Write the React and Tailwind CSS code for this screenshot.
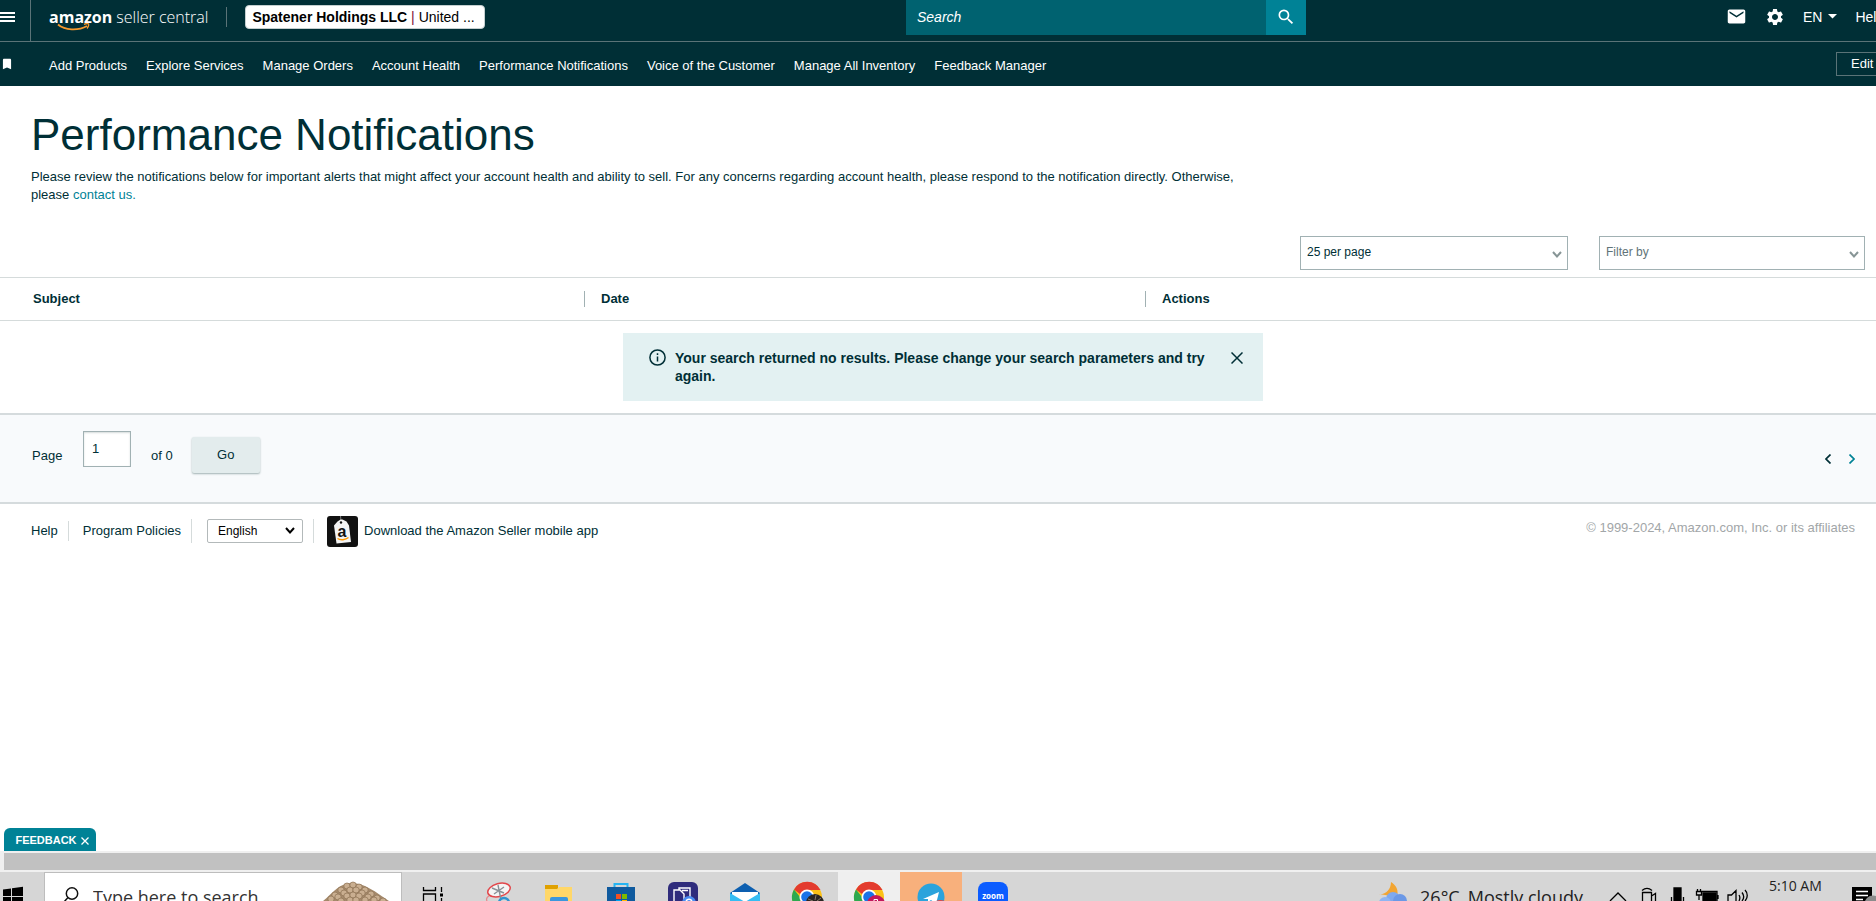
import React from "react";
import { MdMail, MdSettings, MdSearch, MdBookmark } from "react-icons/md";

const navLinks = [
  "Add Products",
  "Explore Services",
  "Manage Orders",
  "Account Health",
  "Performance Notifications",
  "Voice of the Customer",
  "Manage All Inventory",
  "Feedback Manager",
];

const Logo = () => (
  <a href="#" className="relative flex text-white leading-5 whitespace-nowrap">
    <span className="font-['Open_Sans','Noto_Sans',sans-serif] text-base leading-5 font-bold">
      amazon
    </span>
    <span className="ml-1 font-['Open_Sans','Noto_Sans',sans-serif] text-base leading-5 font-light">
      seller central
    </span>
    <svg
      className="absolute left-2 top-4"
      width="36"
      height="9"
      viewBox="0 0 36 9"
      fill="none"
      stroke="#f79a2d"
    >
      <path d="M1 1.500C8 7.500 21 8 30 3" strokeWidth="1.800" />
      <path d="M27 1.300c2-.8 4-.8 4.500-.3s0 2.800-1.500 4.500" strokeWidth="1.300" />
    </svg>
  </a>
);

const Header = () => (
  <header className="bg-[#002f36] text-white">
    <div className="flex h-[42px] border-b border-[#5a7377]">
      <button aria-label="Menu" className="w-[31px] shrink-0 border-r border-[#5a7377]">
        <svg width="15" height="10" viewBox="0 0 15 10" fill="#fff" className="-mt-2">
          <path d="M0 0h15v2H0zM0 4h15v2H0zM0 8h15v2H0z" />
        </svg>
      </button>
      <div className="flex h-[35px] flex-1 items-center">
        <div className="flex w-[875px] shrink-0 items-center pb-0.5 pl-[18px]">
          <Logo />
          <div className="ml-[18px] h-5 w-px bg-[#5a7377]" />
          <button className="ml-[18px] h-6 w-60 rounded-sm border border-[#c5cfd0] bg-white pl-1.5 text-left text-sm leading-5 text-black">
            <b>Spatener Holdings LLC</b> <span className="text-[#7a1238]">|</span> United ...
          </button>
        </div>
        <form className="flex h-full w-[400px] shrink-0">
          <input
            aria-label="Search"
            placeholder="Search"
            className="h-full min-w-0 flex-1 bg-[#006270] pb-0.5 pl-[11px] text-sm italic outline-none placeholder:text-white"
          />
          <button
            type="button"
            aria-label="Submit search"
            className="flex w-10 items-center justify-center bg-[#008296] pb-0.5"
          >
            <MdSearch size={20} />
          </button>
        </form>
        <div className="ml-auto flex w-[150px] shrink-0 items-center overflow-hidden pb-0.5 text-sm">
          <button aria-label="Messages">
            <MdMail size={21} />
          </button>
          <button aria-label="Settings" className="ml-[18px]">
            <MdSettings size={20} />
          </button>
          <button className="ml-[18px] flex items-center gap-1.5">
            EN
            <svg width="9" height="5" viewBox="0 0 9 5" fill="#fff">
              <path d="M0 0h9L4.500 4.500z" />
            </svg>
          </button>
          <a href="#" className="ml-[18px]">
            Help
          </a>
        </div>
      </div>
    </div>
    <div className="flex h-11 items-center overflow-hidden text-[13px]">
      <MdBookmark size={14} className="w-[14px] shrink-0" />
      <nav className="ml-[35px] flex gap-[19px] pt-1">
        {navLinks.map((link) => (
          <a key={link} href="#" className="whitespace-nowrap">
            {link}
          </a>
        ))}
      </nav>
      <div className="ml-auto w-10 shrink-0 overflow-hidden">
        <button className="h-6 w-14 border border-[#5a7377] pl-3.5 text-left">Edit</button>
      </div>
    </div>
  </header>
);

const FilterSelect = ({ label, width, color }) => (
  <div className={`relative ${width}`}>
    <select
      aria-label={label}
      className={`h-[34px] w-full appearance-none border border-[#a1b1b3] bg-white px-1.5 pb-0.5 text-xs ${color}`}
    >
      <option>{label}</option>
    </select>
    <svg
      className="pointer-events-none absolute right-1.5 top-[15px]"
      width="10"
      height="7"
      viewBox="0 0 10 7"
      fill="none"
      stroke="#879596"
      strokeWidth="2"
    >
      <path d="M1 1l4 4.500L9 1" />
    </svg>
  </div>
);

const Notifications = () => (
  <main>
    <section className="px-[31px] pt-6">
      <h1 className="text-[44px] leading-[50px]">Performance Notifications</h1>
      <p className="mt-2 max-w-[1240px] text-[13px] leading-[18px]">
        Please review the notifications below for important alerts that might affect your account
        health and ability to sell. For any concerns regarding account health, please respond to the
        notification directly. Otherwise, please{" "}
        <a href="#" className="text-[#008296]">
          contact us.
        </a>
      </p>
    </section>
    <div className="mt-8 flex justify-end gap-[31px] pr-[11px]">
      <FilterSelect label="25 per page" width="w-[268px]" color="text-[#002f36]" />
      <FilterSelect label="Filter by" width="w-[266px]" color="text-[#5f7478]" />
    </div>
    <table className="mt-[7px] w-full table-fixed border-y border-[#d5dbdb] text-left text-[13px]">
      <thead>
        <tr className="h-[43px]">
          <th className="w-[584px] pl-[33px]">Subject</th>
          <th className="w-[561px]">
            <div className="border-l border-[#a1b1b3] pl-4 leading-4">Date</div>
          </th>
          <th>
            <div className="border-l border-[#a1b1b3] pl-4 leading-4">Actions</div>
          </th>
        </tr>
      </thead>
    </table>
    <div className="mt-3 flex px-[623px]">
      <div role="alert" className="flex h-[68px] w-[640px] shrink-0 bg-[#e3f1f2] pl-[26px] pt-4">
        <svg
          className="shrink-0"
          width="17"
          height="17"
          viewBox="0 0 17 17"
          fill="none"
          stroke="#002f36"
          strokeWidth="1.500"
        >
          <circle cx="8.500" cy="8.500" r="7.600" />
          <path d="M8.500 7.500v5M8.500 4.300v1.700" />
        </svg>
        <p className="ml-[9px] w-[545px] text-sm font-bold leading-[18px]">
          Your search returned no results. Please change your search parameters and try again.
        </p>
        <button aria-label="Close" className="ml-[11px] h-[17px]">
          <svg
            width="12"
            height="12"
            viewBox="0 0 12 12"
            stroke="#002f36"
            strokeWidth="1.500"
          >
            <path d="M.5.5l11 11M11.500.5l-11 11" />
          </svg>
        </button>
      </div>
    </div>
    <div className="mt-3 flex h-[91px] border-y-2 border-[#d5dbdd] bg-[#f8fafc] pl-8 pr-[21px] text-[13px]">
      <label htmlFor="page" className="mt-[31px] w-[51px]">
        Page
      </label>
      <input
        id="page"
        defaultValue="1"
        className="mt-4 h-9 w-12 border border-[#a1b1b3] bg-white pb-0.5 pl-2 text-[13px] shadow-[inset_0_1px_2px_#d5dbdb]"
      />
      <span className="ml-5 mt-[31px]">of 0</span>
      <button className="ml-[19px] mt-[22px] h-9 w-[68px] rounded-xs bg-[#e3eced] shadow-[0_1px_2px_#a1b1b3]">
        Go
      </button>
      <div className="ml-auto flex h-[88px] items-center gap-[18px]">
        <button aria-label="Previous page">
          <svg width="6" height="10" viewBox="0 0 6 10" fill="none" stroke="#002f36" strokeWidth="1.700">
            <path d="M5.500.500L1 5l4.500 4.500" />
          </svg>
        </button>
        <button aria-label="Next page">
          <svg width="6" height="10" viewBox="0 0 6 10" fill="none" stroke="#008296" strokeWidth="1.700">
            <path d="M.5.5L5 5 .5 9.500" />
          </svg>
        </button>
      </div>
    </div>
  </main>
);

const AppBadge = () => (
  <svg width="31" height="31" viewBox="0 0 31 31" className="mr-1.5">
    <rect width="31" height="31" rx="3" fill="#111" />
    <path d="M13.500 0l.5 5" stroke="#777" />
    <path d="M10.500 5.500l3-2h2l4 2 2.500 4 2 16.500-14.500 1.500L7 9.500z" fill="#f4f4f4" />
    <circle cx="14" cy="6.500" r="1.200" fill="#111" />
    <text x="10.500" y="20.500" fontSize="16" fontWeight="bold" fill="#111">
      a
    </text>
    <path d="M10.500 22.500c3 2 8 1.500 11-1" stroke="#f90" strokeWidth="1.500" fill="none" />
  </svg>
);

const Footer = () => (
  <footer className="flex items-start pl-[31px] pr-[21px] pt-3 text-[13px]">
    <div className="flex h-[31px] items-center pb-px">
      <a href="#" className="pr-2.5">
        Help
      </a>
      <a href="#" className="border-l border-[#d5dbdb] pl-3.5 pr-2.5">
        Program Policies
      </a>
      <div className="relative border-l border-[#d5dbdb] pl-[15px] pr-2.5">
        <select
          aria-label="Language"
          className="block h-6 w-24 appearance-none rounded-xs border border-[#b3b9ba] bg-white pl-2.5 text-xs text-black"
        >
          <option>English</option>
        </select>
        <svg
          className="pointer-events-none absolute right-[18px] top-2"
          width="10"
          height="8"
          viewBox="0 0 10 8"
          fill="none"
          stroke="#000"
          strokeWidth="2"
        >
          <path d="M1 1l4 4.500L9 1" />
        </svg>
      </div>
      <div className="h-6 w-px bg-[#d5dbdb]" />
      <a href="#" className="flex items-center pl-[13px]">
        <AppBadge />
        Download the Amazon Seller mobile app
      </a>
    </div>
    <span className="ml-auto mt-0.5 text-[#a2a6a8]">
      © 1999-2024, Amazon.com, Inc. or its affiliates
    </span>
  </footer>
);

const TaskButton = ({ label, tile, children }) => (
  <button aria-label={label} className={`h-[29px] w-[62px] shrink-0 ${tile || ""}`}>
    <svg width="62" height="29" viewBox="0 0 62 29" className="block">
      {children}
    </svg>
  </button>
);

const Chrome = () => (
  <>
    <circle cx="31" cy="25" r="15" fill="#fbc116" />
    <path d="M18 17.500A15 15 0 0 1 44.500 18H31l-7 4z" fill="#e33b2e" />
    <path d="M18 17.500A15 15 0 0 0 25 39l6-8-7-6z" fill="#2da94f" />
    <circle cx="31" cy="25" r="7.500" fill="#fff" />
    <circle cx="31" cy="25" r="5.800" fill="#1a73e8" />
  </>
);

const seeds = [
  [16, 22], [22, 17], [28, 13], [34, 12], [40, 14], [46, 17], [52, 21], [58, 25],
  [12, 26], [19, 24], [25, 20], [31, 17], [37, 17], [43, 20], [49, 24], [55, 27],
  [22, 28], [28, 23], [34, 22], [40, 23], [46, 27], [31, 27], [37, 27], [64, 28],
];

const TaskSearch = () => (
  <div className="flex w-[358px] shrink-0 items-start overflow-hidden border border-b-0 border-[#bdbdbd] bg-white">
    <svg
      width="16"
      height="16"
      viewBox="0 0 16 16"
      fill="none"
      stroke="#111"
      strokeWidth="1.500"
      className="ml-[18px] mt-3.5 shrink-0"
    >
      <circle cx="9" cy="6.500" r="5.700" />
      <path d="M5 10.500L.5 15.500" />
    </svg>
    <input
      aria-label="Type here to search"
      placeholder="Type here to search"
      className="ml-3.5 mt-3 h-6 w-[220px] bg-transparent text-lg leading-6 placeholder:text-[#333]"
    />
    <svg width="72" height="28" viewBox="0 0 72 28" className="ml-1.5 shrink-0">
      <path d="M4 28C14 20 20 10 33 10c12 0 24 9 37 18z" fill="#a58a6c" />
      {seeds.map(([x, y]) => (
        <ellipse
          key={`${x}-${y}`}
          cx={x}
          cy={y}
          rx="3.200"
          ry="3"
          fill="#c9ae90"
          stroke="#8d7153"
          strokeWidth=".7"
        />
      ))}
    </svg>
  </div>
);

const Tray = () => (
  <div className="ml-auto flex items-start">
    <svg width="30" height="29" viewBox="0 0 30 29">
      <path d="M13 10c5 3 8 8 6 15L1 22c6 1 12-4 12-12z" fill="#f2a532" />
      <circle cx="15" cy="27" r="7" fill="#7fa9ee" />
      <circle cx="22" cy="29" r="7" fill="#6b98e6" />
      <circle cx="7" cy="31" r="6" fill="#8fb5f2" />
    </svg>
    <span className="ml-3 mt-[13px] flex gap-2 whitespace-nowrap text-lg leading-6">
      <span>26°C</span>
      <span>Mostly cloudy</span>
    </span>
    <svg
      width="140"
      height="29"
      viewBox="0 0 140 29"
      fill="none"
      stroke="#000"
      strokeWidth="1.300"
      className="ml-[26px]"
    >
      <path d="M1 29l8-8 8 8" />
      <path d="M33 18.500c3-2.500 7-2.500 10 0M33.500 29v-8.500h9V29M42.500 24l4-2.500V29" />
      <path d="M65 16h7v13h-7z" fill="#000" />
      <path d="M62.500 25v4M74.500 25v4" />
      <path d="M94 21h13v8H94z" fill="#000" />
      <path d="M93 19.500h15V29M109 23v4M87.500 19.500h5v3.500h-5zM88.500 17v2.500M91.500 17v2.500M90 23v5" />
      <path d="M119 29v-6h3.500l4.500-4.500V29M130 23c1 1.500 1 4 0 6M133 20.500c2 2.500 2 6 0 8.500M136 18c3 3 3 8 0 11" />
    </svg>
    <span className="ml-5 mt-1 w-[83px] whitespace-nowrap text-sm leading-5">5:10 AM</span>
    <svg width="24" height="29" viewBox="0 0 24 29">
      <path d="M0 15h20v14H0z" fill="#000" />
      <path d="M4 19.500h12M4 23.500h12M4 27.500h7" stroke="#fff" strokeWidth="1.300" />
      <circle cx="21" cy="32" r="8.500" fill="#8c8c8c" />
    </svg>
  </div>
);

const Taskbar = () => (
  <div className="flex h-[29px] shrink-0 overflow-hidden bg-[#d6d6d6] font-['Open_Sans','Noto_Sans',sans-serif] text-[#222]">
    <button aria-label="Start" className="w-11 shrink-0">
      <svg width="44" height="29" viewBox="0 0 44 29" fill="#000">
        <path d="M3 17.500l8-1V24H3zM12 16.300l11-1.500V24H12zM3 25h8v4H3zM12 25h11v4H12z" />
      </svg>
    </button>
    <TaskSearch />
    <TaskButton label="Task view">
      <g fill="none" stroke="#000" strokeWidth="1.300">
        <path d="M21.500 15v3.500h12V15M21.500 29v-7h12v7M39.500 15v5M39.500 26v3" />
      </g>
      <path d="M38 21.500h3v3h-3z" />
    </TaskButton>
    <div className="ml-0.5 flex shrink-0">
      <TaskButton label="Snipping Tool">
        <ellipse
          cx="33"
          cy="18"
          rx="11.500"
          ry="6.500"
          fill="#f5f5f5"
          stroke="#e2474b"
          strokeWidth="1.500"
          transform="rotate(-15 33 18)"
        />
        <path d="M26 16l12 5M32 13l3 15M28 22l10-7" stroke="#8a9096" strokeWidth="1.400" />
        <path d="M21 29c-1-2 0-4 2-5" stroke="#e58a8d" strokeWidth="1.300" fill="none" />
        <circle cx="38" cy="31" r="5" fill="none" stroke="#2f93d0" strokeWidth="2.500" />
      </TaskButton>
      <TaskButton label="File Explorer">
        <path d="M17 13h13v7H17z" fill="#e0a100" />
        <path d="M17 17h12l2-2h13v14H17z" fill="#ffd768" />
        <path d="M22 29v-2q0-2 2-2h14q2 0 2 2v2z" fill="#3a97dd" />
      </TaskButton>
      <TaskButton label="Microsoft Store">
        <path d="M24.500 17v-5h13v5" fill="none" stroke="#25b4f2" strokeWidth="2" />
        <path d="M17 15h28v14H17z" fill="#0f5a9e" />
        <path d="M26 22h5v5h-5z" fill="#f25022" />
        <path d="M32 22h5v5h-5z" fill="#7fba00" />
        <path d="M26 28h5v1h-5z" fill="#00a4ef" />
        <path d="M32 28h5v1h-5z" fill="#ffb900" />
      </TaskButton>
      <TaskButton label="Documents">
        <rect x="16" y="10" width="30" height="30" rx="6" fill="#2f2c7c" />
        <path
          d="M22 29V18h6l4 4v7M27 18v-2h11v9M30 18.500h6"
          fill="none"
          stroke="#fff"
          strokeWidth="1.400"
        />
        <circle cx="37" cy="31" r="7" fill="#4a8cf0" />
        <circle cx="37" cy="30" r="2.800" fill="none" stroke="#fff" strokeWidth="1.500" />
      </TaskButton>
      <TaskButton label="Mail">
        <path d="M16 21l15-10 15 10v8H16z" fill="#0d5fb0" />
        <path d="M18 20h26v9H18z" fill="#fff" />
        <path d="M16 21l15 9-15 5zM46 21l-15 9 15 5z" fill="#35bdf3" />
      </TaskButton>
      <TaskButton label="Chrome">
        <Chrome />
        <circle cx="39" cy="31" r="9" fill="#2a2522" />
        <path d="M32 27l5 2M40 23l-1 5M45 26l-4 3" stroke="#85786a" />
      </TaskButton>
      <TaskButton label="Chrome, second profile" tile="bg-[#efefef]">
        <Chrome />
        <circle cx="38" cy="32" r="9" fill="#c2185b" />
        <path d="M36 29v-1.500h3.500V29" stroke="#fff" fill="none" />
      </TaskButton>
      <TaskButton label="Telegram" tile="bg-[#f8b07c]">
        <circle cx="31" cy="25" r="13.500" fill="#2ba3dc" />
        <path d="M23 27l16-7-3 12-5-4-3 2v-3z" fill="#fff" />
        <path d="M36 29q4-2 9 0z" fill="#e04848" />
      </TaskButton>
      <TaskButton label="Zoom">
        <rect x="16" y="10" width="30" height="30" rx="8" fill="#0b5cff" />
        <text x="31" y="27" textAnchor="middle" fontSize="8" fontWeight="bold" fill="#fff">
          zoom
        </text>
      </TaskButton>
    </div>
    <Tray />
  </div>
);

const App = () => {
  return (
    <div className="flex h-screen flex-col overflow-hidden bg-white font-['Liberation_Sans',Arial,sans-serif] text-[#002f36]">
      <Header />
      <Notifications />
      <Footer />
      <button className="ml-1 mt-auto flex h-[23px] w-[92px] shrink-0 items-center justify-center gap-1 rounded-t-md bg-[#008296] pt-0.5 pl-1 text-[11px] font-bold text-white">
        FEEDBACK
        <svg width="8" height="8" viewBox="0 0 8 8" stroke="#fff" strokeWidth="1.300">
          <path d="M.5.5l7 7M7.500.5l-7 7" />
        </svg>
      </button>
      <div className="h-[21px] shrink-0 bg-[#f0f0f0] py-0.5 pl-1">
        <div className="h-[17px] bg-[#c1c1c1]" />
      </div>
      <Taskbar />
    </div>
  );
};

export default App;
